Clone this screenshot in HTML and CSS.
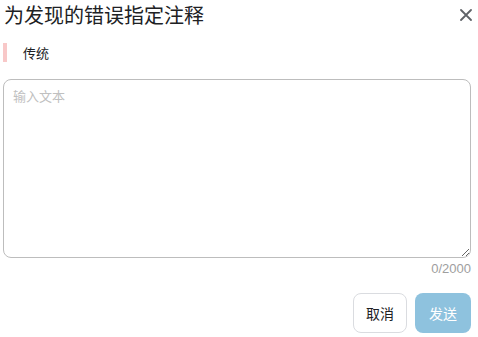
FILE: index.html
```html
<!DOCTYPE html>
<html lang="zh">
<head>
<meta charset="utf-8">
<link rel="stylesheet" href="styles.css">
</head>
<body>
<div class="dialog">
  <div class="header">
    <h1 class="title">为发现的错误指定注释</h1>
    <button class="close" aria-label="关闭">
      <svg width="12" height="12" viewBox="0 0 12 12"><path d="M1 1L11 11M11 1L1 11" stroke="#5f6368" stroke-width="1.8" stroke-linecap="round"/></svg>
    </button>
  </div>
  <div class="quote">传统</div>
  <textarea class="input" placeholder="输入文本"></textarea>
  <div class="counter">0/2000</div>
  <div class="actions">
    <button class="btn cancel">取消</button>
    <button class="btn send">发送</button>
  </div>
</div>
</body>
</html>
```
FILE: styles.css
```css
html, body {
  margin: 0;
  padding: 0;
  background: #fff;
}
body {
  font-family: "Noto Sans CJK SC", "Liberation Sans", sans-serif;
  color: #202124;
}
.dialog {
  width: 478px;
  padding: 0 7px 0 3px;
  box-sizing: border-box;
}
.header {
  display: flex;
  align-items: center;
  justify-content: space-between;
  height: 30px;
}
.title {
  margin: 0 0 0 1px;
  font-size: 20px;
  font-weight: 400;
  line-height: 30px;
  color: #202124;
}
.close {
  border: 0;
  background: none;
  padding: 0;
  width: 12px;
  height: 12px;
  margin-right: -1px;
  display: flex;
}
.quote {
  margin-top: 13px;
  height: 19px;
  border-left: 4px solid #f8c8c8;
  padding-left: 16px;
  font-size: 13px;
  line-height: 19px;
  color: #202124;
}
.input {
  display: block;
  margin-top: 17px;
  width: 468px;
  height: 179px;
  box-sizing: border-box;
  border: 1px solid #bdbdbd;
  border-radius: 8px;
  padding: 6px 9px;
  font-family: "Noto Sans CJK SC", "Liberation Sans", sans-serif;
  font-size: 13px;
  line-height: 20px;
  resize: vertical;
  outline: none;
}
.input::placeholder {
  color: #c0c0c0;
}
.counter {
  text-align: right;
  font-family: "Liberation Sans", "Noto Sans CJK SC", sans-serif;
  font-size: 13px;
  line-height: 16px;
  margin-top: 3px;
  color: #9e9e9e;
}
.actions {
  display: flex;
  justify-content: flex-end;
  gap: 8px;
  margin-top: 16px;
}
.btn {
  height: 40px;
  border-radius: 8px;
  font-family: "Noto Sans CJK SC", "Liberation Sans", sans-serif;
  font-size: 14px;
  padding: 0 12px;
  box-sizing: border-box;
}
.cancel {
  width: 54px;
  background: #fff;
  border: 1px solid #dadce0;
  color: #202124;
}
.send {
  width: 56px;
  background: #8ec2de;
  border: 0;
  color: #fff;
}
```
